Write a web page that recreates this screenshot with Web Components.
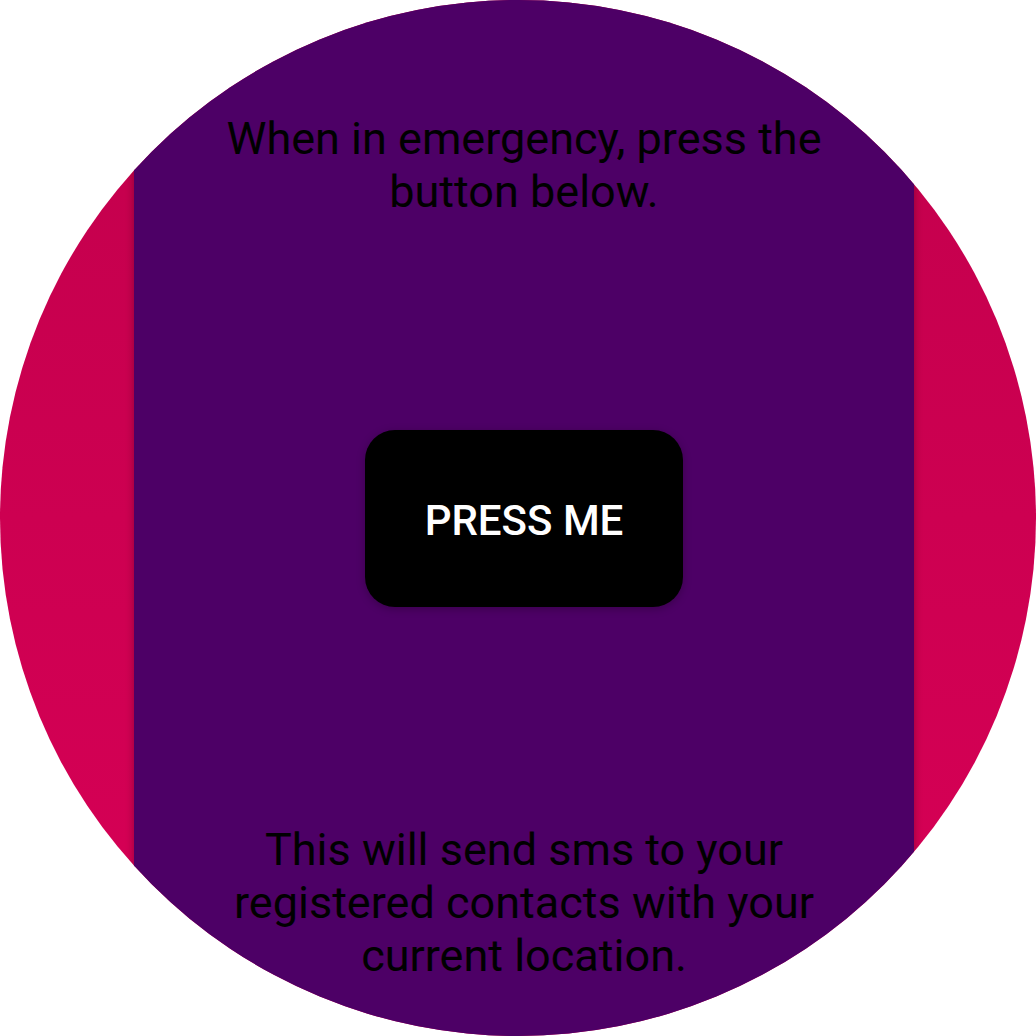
<!DOCTYPE html>
<html lang="en">
<head>
<meta charset="utf-8">
<meta name="viewport" content="width=device-width, initial-scale=1">
<title>Emergency</title>
<style>
body { margin: 0; background: #fff; font-family: Roboto, sans-serif; }
</style>
</head>
<body>
<watch-face>
  <emergency-card>
    <p slot="intro">When in emergency, press the button below.</p>
    <press-button>PRESS ME</press-button>
    <p slot="note">This will send sms to your registered contacts with your current location.</p>
  </emergency-card>
</watch-face>
<script>
class WatchFace extends HTMLElement {
  constructor() {
    super();
    this.attachShadow({ mode: 'open' }).innerHTML = `
      <style>
        :host {
          display: flex;
          justify-content: center;
          box-sizing: border-box;
          width: min(100vw, 100vh);
          aspect-ratio: 1;
          margin: 0 auto;
          padding-left: 12px;
          clip-path: circle(50%);
          background: linear-gradient(#c2004c, #d80056);
        }
      </style>
      <slot></slot>`;
  }
}
class EmergencyCard extends HTMLElement {
  constructor() {
    super();
    this.attachShadow({ mode: 'open' }).innerHTML = `
      <style>
        :host {
          display: grid;
          grid-template-rows: 1fr auto 1fr;
          justify-items: center;
          box-sizing: border-box;
          width: 780px;
          max-width: 76.2%;
          padding: 54px 80px;
          background: #4d0066;
          box-shadow: 0 2px 8px rgba(0, 0, 0, .3);
          color: #000;
          font-size: 45px;
          line-height: 53px;
          text-align: center;
        }
        ::slotted(p) { margin: 0; }
        ::slotted([slot="intro"]) { padding-top: 58px; }
        ::slotted([slot="note"]) { align-self: end; }
      </style>
      <slot name="intro"></slot>
      <slot></slot>
      <slot name="note"></slot>`;
  }
}
class PressButton extends HTMLElement {
  constructor() {
    super();
    this.attachShadow({ mode: 'open' }).innerHTML = `
      <style>
        :host { display: block; }
        button {
          display: block;
          padding: 65px 60px 60px;
          border: 0;
          border-radius: 30px;
          background: #000;
          box-shadow: 0 2px 8px rgba(0, 0, 0, .25);
          color: #fff;
          font: 500 42px/52px Roboto, sans-serif;
          cursor: pointer;
        }
      </style>
      <button type="button"><slot></slot></button>`;
  }
}
customElements.define('watch-face', WatchFace);
customElements.define('emergency-card', EmergencyCard);
customElements.define('press-button', PressButton);
</script>
</body>
</html>
